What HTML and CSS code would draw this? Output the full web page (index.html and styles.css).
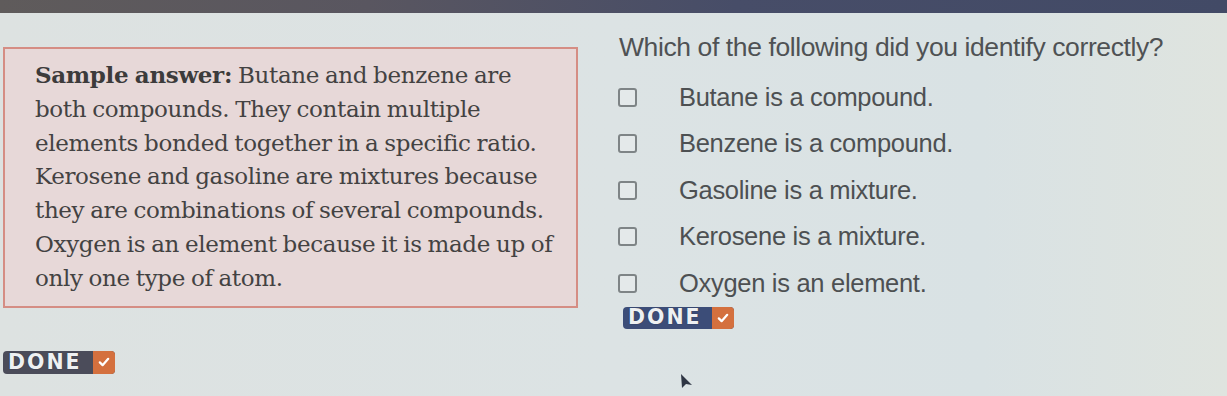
FILE: index.html
```html
<!DOCTYPE html>
<html lang="en">
<head>
<meta charset="utf-8">
<title>Sample answer</title>
<link rel="stylesheet" href="styles.css">
</head>
<body>
<div class="topbar"></div>
<div class="main">
  <div class="answer">
    <p><b>Sample answer:</b> Butane and benzene are<br>both compounds. They contain multiple<br>elements bonded together in a specific ratio.<br>Kerosene and gasoline are mixtures because<br>they are combinations of several compounds.<br>Oxygen is an element because it is made up of<br>only one type of atom.</p>
  </div>
  <div class="quiz">
    <p class="question">Which of the following did you identify correctly?</p>
    <ul class="options">
      <li><span class="box"></span><span>Butane is a compound.</span></li>
      <li><span class="box"></span><span>Benzene is a compound.</span></li>
      <li><span class="box"></span><span>Gasoline is a mixture.</span></li>
      <li><span class="box"></span><span>Kerosene is a mixture.</span></li>
      <li><span class="box"></span><span>Oxygen is an element.</span></li>
    </ul>
    <button class="done done-blue"><span class="label">DONE</span><span class="chk"><svg viewBox="0 0 20 20" width="14" height="14"><path d="M4 10.5 L8 14.5 L16 5.5" fill="none" stroke="#fff" stroke-width="3.2" stroke-linecap="round" stroke-linejoin="round"/></svg></span></button>
  </div>
</div>
<button class="done done-gray"><span class="label">DONE</span><span class="chk"><svg viewBox="0 0 20 20" width="14" height="14"><path d="M4 10.5 L8 14.5 L16 5.5" fill="none" stroke="#fff" stroke-width="3.2" stroke-linecap="round" stroke-linejoin="round"/></svg></span></button>
<svg class="cursor" viewBox="0 0 14 16" width="14" height="16"><path d="M2 1 L13 12 L7 11 L3 15 Z" fill="#2f3644"/></svg>
</body>
</html>
```
FILE: styles.css
```css
html, body {
  margin: 0;
  padding: 0;
}
body {
  width: 1227px;
  height: 396px;
  overflow: hidden;
  position: relative;
  background: linear-gradient(90deg, #dde2e1 0%, #dce3e4 50%, #d9e2e4 80%, #dfe4df 100%);
  font-family: "Liberation Sans", Arial, sans-serif;
}
.topbar {
  height: 13px;
  background: linear-gradient(90deg, #5f5b5b 0%, #595660 30%, #474d68 60%, #424a66 100%);
}
.main {
  display: flex;
  align-items: flex-start;
}
.answer {
  margin: 34px 0 0 3px;
  width: 571px;
  height: 257px;
  border: 2px solid #d58d84;
  background: #e7d8d8;
  box-sizing: content-box;
}
.answer p {
  margin: 9px 0 0 30px;
  font-family: "DejaVu Serif", Georgia, serif;
  font-size: 23px;
  line-height: 33.8px;
  color: #434242;
  letter-spacing: -0.35px;
  word-spacing: -1px;
}
.answer b {
  font-weight: bold;
  color: #3c3b3b;
}
.quiz {
  margin-left: 40px;
  padding-top: 19px;
}
.question {
  margin: 0 0 0 1px;
  font-size: 26.5px;
  line-height: 30px;
  color: #4f5254;
  letter-spacing: -0.4px;
  white-space: nowrap;
}
.options {
  list-style: none;
  margin: 12px 0 0 0;
  padding: 0;
}
.options li {
  display: flex;
  align-items: center;
  height: 46.5px;
  font-size: 25.5px;
  color: #4d5052;
  letter-spacing: -0.3px;
}
.box {
  width: 15px;
  height: 15px;
  border: 2px solid #7e8486;
  border-radius: 3px;
  background: #e4e9ea;
  margin-right: 42px;
  flex: none;
}
.done {
  display: flex;
  align-items: stretch;
  padding: 0;
  border: none;
  border-radius: 4px;
  overflow: hidden;
  font-family: "DejaVu Sans", "Liberation Sans", sans-serif;
  font-weight: bold;
  font-size: 20.5px;
  line-height: 1;
  color: #eef0f2;
  cursor: pointer;
}
.done .label {
  display: flex;
  align-items: center;
  padding-left: 5px;
  letter-spacing: 2px;
  text-shadow: 0 0 1px #1d2230;
}
.done .chk {
  display: flex;
  align-items: center;
  justify-content: center;
  width: 22px;
  margin-left: auto;
  background: #d4703e;
}
.done-blue {
  margin: 0 0 0 5px;
  width: 111px;
  height: 22px;
  background: #3c4d78;
}
.done-gray {
  margin: 22px 0 0 3px;
  width: 112px;
  height: 23px;
  background: #4b4c5a;
}
.cursor {
  position: absolute;
  left: 679px;
  top: 373px;
}
```
